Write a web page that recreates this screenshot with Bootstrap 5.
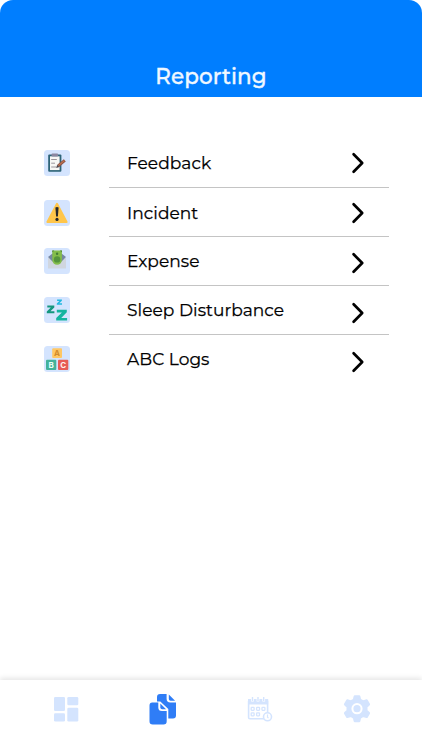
<!DOCTYPE html>
<html lang="en">
<head>
<meta charset="utf-8">
<meta name="viewport" content="width=device-width, initial-scale=1">
<title>Reporting</title>
<link href="https://cdn.jsdelivr.net/npm/bootstrap@5.3.0/dist/css/bootstrap.min.css" rel="stylesheet">
<style>
body{font-family:Montserrat,Inter,"Open Sans",sans-serif;color:#000;background:#fff}
.app-head{height:97px;background:#007eff;border-radius:13px 13px 0 0;padding-bottom:7px}
.app-title{font-size:21.5px;line-height:28px;font-weight:500;color:#f0f8ff;letter-spacing:.1px;-webkit-text-stroke:.35px #f0f8ff}
.report-list{padding:41px 33px 0 44px}
.report-item{height:49px;color:#000}
.report-item:first-child{height:50px}
.tile{width:26px;height:26px;margin-right:39px;flex:none;margin-top:-1px}
.tile-low{margin-top:1px}
.item-body{border-bottom:1px solid #c4c4c4;padding:0 24px 0 18px}
.report-item:last-child .item-body{border-color:transparent}
.item-label{font-size:17px;line-height:24px;letter-spacing:.06px;-webkit-text-stroke:.25px #000}
.label-low{padding-top:2px}
.chev{width:14px;height:22px;margin-top:1px}
.chev-low{margin-top:4px}.chev-lower{margin-top:6px}
.tabs{height:70px;box-shadow:0 -2px 5px rgba(0,0,0,.1);background:#fff;padding:0 17px 0 18px}
.tabs a{width:25%;padding-top:14px}
.tabs svg{width:30px;height:32px}
</style>
<script src="https://cdn.jsdelivr.net/npm/bootstrap@5.3.0/dist/js/bootstrap.bundle.min.js"></script>
</head>
<body>
<div class="d-flex flex-column vh-100 overflow-hidden">
  <header class="app-head d-flex align-items-end justify-content-center flex-shrink-0">
    <h1 class="app-title mb-0">Reporting</h1>
  </header>
  <main class="report-list flex-grow-1">
    <a href="#" class="report-item d-flex text-decoration-none">
      <span class="d-flex align-items-center"><svg class="tile" viewBox="0 0 26 26"><rect width="26" height="26" rx="3.5" fill="#d4e4fe"/><rect x="4.2" y="4.5" width="13.2" height="17.3" rx="1" fill="#2d6478"/><rect x="6" y="6.3" width="9.6" height="13.8" fill="#f8f7f5"/><rect x="7.5" y="3.6" width="6.6" height="3" rx="1" fill="#8b86a0"/><path d="M7.2 9.5h5.6M7.2 13.2h3.8M7.2 17h5" stroke="#9b959b"/><path d="M14.2 15.9l6.6-5.6" stroke="#8c5148" stroke-width="3"/><path d="M14.3 15.7l6.4-5.4" stroke="#c2784e" stroke-width="1.1"/><path d="M13.2 14.7l2.3 2.3-3.3 1z" fill="#4b4148"/></svg></span>
      <span class="item-body d-flex align-items-center justify-content-between flex-grow-1"><span class="item-label">Feedback</span><svg class="chev" viewBox="0 0 14 22" fill="none" stroke="#000" stroke-width="2.7" stroke-linecap="round" stroke-linejoin="round"><path d="M2.6 2.3l8.6 8.7-8.6 8.7"/></svg></span>
    </a>
    <a href="#" class="report-item d-flex text-decoration-none">
      <span class="d-flex align-items-center"><svg class="tile tile-low" viewBox="0 0 26 26"><rect width="26" height="26" rx="3.5" fill="#d4e4fe"/><path d="M13 3.8L22.6 22H3.4z" fill="#ffc64b" stroke="#ffc64b" stroke-width="2" stroke-linejoin="round"/><path d="M11.4 7.5q1.6-1 3.2 0l-.7 9h-1.8z" fill="#25272b"/><circle cx="13" cy="19.4" r="1.6" fill="#25272b"/></svg></span>
      <span class="item-body d-flex align-items-center justify-content-between flex-grow-1"><span class="item-label label-low">Incident</span><svg class="chev" viewBox="0 0 14 22" fill="none" stroke="#000" stroke-width="2.7" stroke-linecap="round" stroke-linejoin="round"><path d="M2.6 2.3l8.6 8.7-8.6 8.7"/></svg></span>
    </a>
    <a href="#" class="report-item d-flex text-decoration-none">
      <span class="d-flex align-items-center"><svg class="tile" viewBox="0 0 26 26"><rect width="26" height="26" rx="3.5" fill="#d4e4fe"/><path d="M4 9l4.5-3.5h9L22 9l-4 5H8z" fill="#7688a3"/><path d="M4 9.2l4.5 4.3h9L22 9.2V20.5H4z" fill="#d0d6df"/><path d="M8.3 2.4h9.6v9.6a4.8 4.8 0 0 1-9.6 0z" fill="#83bd4b"/><path d="M8.3 2.4h2l-2 2zM17.9 2.4h-2l2 2z" fill="#51883c"/><circle cx="13.1" cy="5.7" r="1.2" fill="#427b35"/><circle cx="13.1" cy="11.4" r="3.2" fill="#54943c"/></svg></span>
      <span class="item-body d-flex align-items-center justify-content-between flex-grow-1"><span class="item-label">Expense</span><svg class="chev chev-low" viewBox="0 0 14 22" fill="none" stroke="#000" stroke-width="2.7" stroke-linecap="round" stroke-linejoin="round"><path d="M2.6 2.3l8.6 8.7-8.6 8.7"/></svg></span>
    </a>
    <a href="#" class="report-item d-flex text-decoration-none">
      <span class="d-flex align-items-center"><svg class="tile" viewBox="0 0 26 26"><rect width="26" height="26" rx="3.5" fill="#d4e4fe"/><g><path d="M3.3 8.6h7v1.8l-3.9 3.9h4v2H2.8v-1.8l4-3.9H3.3z" fill="#14977f"/><path d="M13.1 2.4h4.8v1.3l-2.6 2.5H18v1.5h-5.2V6.4l2.6-2.5h-2.3z" fill="#24b8df"/><path d="M12.8 12.8h10v2.5l-5.6 5.6h5.9v2.7H12.2v-2.5l5.7-5.6h-5.1z" fill="#14b4a0"/></g></svg></span>
      <span class="item-body d-flex align-items-center justify-content-between flex-grow-1"><span class="item-label">Sleep Disturbance</span><svg class="chev chev-lower" viewBox="0 0 14 22" fill="none" stroke="#000" stroke-width="2.7" stroke-linecap="round" stroke-linejoin="round"><path d="M2.6 2.3l8.6 8.7-8.6 8.7"/></svg></span>
    </a>
    <a href="#" class="report-item d-flex text-decoration-none">
      <span class="d-flex align-items-center"><svg class="tile" viewBox="0 0 26 26" font-family="Inter,sans-serif" font-weight="700" font-size="8" text-anchor="middle"><rect width="26" height="26" rx="3.5" fill="#d4e4fe"/><rect x="8.2" y="2.3" width="9.8" height="9.8" rx="1" fill="#ffc764"/><rect x="2" y="13.7" width="10.3" height="10.3" rx="1" fill="#43b29b"/><rect x="14" y="13.7" width="10.3" height="10.3" rx="1" fill="#e75b56"/><text x="13.1" y="10.2" fill="#d18b2c">A</text><text x="7.1" y="21.8" fill="#e9fff8">B</text><text x="19.1" y="21.8" fill="#fff0ed">C</text></svg></span>
      <span class="item-body d-flex align-items-center justify-content-between flex-grow-1"><span class="item-label">ABC Logs</span><svg class="chev chev-lower" viewBox="0 0 14 22" fill="none" stroke="#000" stroke-width="2.7" stroke-linecap="round" stroke-linejoin="round"><path d="M2.6 2.3l8.6 8.7-8.6 8.7"/></svg></span>
    </a>
  </main>
  <nav class="tabs d-flex flex-shrink-0" aria-label="Main">
    <a href="#" class="d-flex justify-content-center align-items-start" aria-label="Dashboard"><svg viewBox="0 0 30 32" fill="#d4e4fe"><rect x="3" y="3" width="11" height="14" rx="1.3"/><rect x="16.3" y="3" width="11" height="8.2" rx="1.3"/><rect x="3" y="19.3" width="11" height="8.2" rx="1.3"/><rect x="16.3" y="13.7" width="11" height="13.8" rx="1.3"/></svg></a>
    <a href="#" class="d-flex justify-content-center align-items-start" aria-label="Reports"><svg viewBox="0 0 30 32" fill="#2f7df6"><path d="M12.1 0h6.5v4.7q0 3.8 3.8 3.8h5.6v13q0 3-3 3h-4.7V15L12.3 7.5H9V3q0-3 3.1-3z"/><path d="M20.8.6l6.3 6.1h-4.5q-1.8 0-1.8-1.8z"/><path d="M4.2 8.5h6.1v5q0 3.6 3.6 3.6h4.8v10.2q0 3.2-3.2 3.2H4.7q-3.2 0-3.2-3.2V11.5q0-3 2.7-3z"/><path d="M12.3 9.4l5.8 5.9h-4q-1.8 0-1.8-1.8z"/></svg></a>
    <a href="#" class="d-flex justify-content-center align-items-start" aria-label="Calendar"><svg viewBox="0 0 30 32" fill="none" stroke="#d4e4fe"><path d="M20 24.7H4.9Q3.6 24.7 3.6 23.4V7.2q0-1.5 1.5-1.5h16q1.5 0 1.5 1.5V19" stroke-width="1.6"/><path d="M3 5h20.2v5.5H3z" fill="#d4e4fe" stroke="none"/><path d="M7.5 3v4.5M13 3v4.5M18.7 3v4.5" stroke="#fff" stroke-width="2.8"/><path d="M7.5 3v4M13 3v4M18.7 3v4" stroke-width="1.4"/><g stroke-width="1.3"><rect x="6.2" y="13.4" width="2.9" height="2.9" rx=".5"/><rect x="11.6" y="13.4" width="2.9" height="2.9" rx=".5"/><rect x="17" y="13.4" width="2.9" height="2.9" rx=".5"/><rect x="6.2" y="18.9" width="2.9" height="2.9" rx=".5"/><rect x="11.6" y="18.9" width="2.9" height="2.9" rx=".5"/></g><circle cx="22.5" cy="22.8" r="4" fill="#fff" stroke-width="1.6"/><path d="M22.5 20.5v2.7l1 1" stroke-width="1.2"/></svg></a>
    <a href="#" class="d-flex justify-content-center align-items-start" aria-label="Settings"><svg viewBox="0 0 30 32"><g fill="#d4e4fe" stroke="#d4e4fe" stroke-width="2.4" stroke-linejoin="round"><path d="M12.8 2.4h4.4l.8 3.4 3.1 1.8 3.6-1.1 2.2 3.8-2.6 2.6v3.6l2.6 2.6-2.2 3.8-3.6-1.1-3.1 1.8-.8 3.4h-4.4l-.8-3.4-3.1-1.8-3.6 1.1-2.2-3.8 2.6-2.6v-3.6l-2.6-2.6 2.2-3.8 3.6 1.1L12 5.8z"/></g><circle cx="15" cy="14.7" r="4.6" fill="#d4e4fe" stroke="#fff" stroke-width="2"/></svg></a>
  </nav>
</div>
</body>
</html>
